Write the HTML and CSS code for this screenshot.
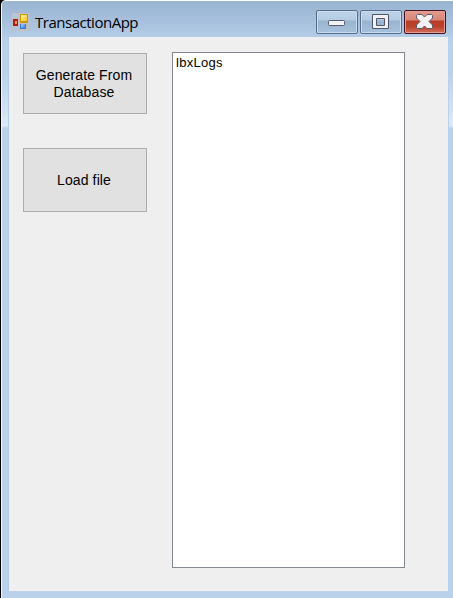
FILE: index.html
```html
<!DOCTYPE html>
<html lang="en">
<head>
<meta charset="utf-8">
<title>TransactionApp</title>
<link rel="stylesheet" href="styles.css">
</head>
<body>
<div class="window">
  <header class="titlebar">
    <svg class="app-icon" width="18" height="18" viewBox="0 0 18 18" aria-hidden="true">
      <defs>
        <linearGradient id="gold" x2="1" y2="1"><stop stop-color="#fff5a0"/><stop offset="1" stop-color="#f5c32c"/></linearGradient>
        <linearGradient id="azure" x2="1" y2="1"><stop stop-color="#a9d0ff"/><stop offset="1" stop-color="#3b7de8"/></linearGradient>
      </defs>
      <path d="M0 0h18v18H0z" fill="#bfc1c4"/>
      <path d="M1 1h5v4H1zM1 13h5v4H1z" fill="#aec6df"/>
      <path d="M8 1h8v9H8z" fill="#c99708"/>
      <path d="M9 2h6v6H9z" fill="url(#gold)"/>
      <path d="M1 6h5v7H1z" fill="#b51c10"/>
      <path d="M3 8h2v3H3z" fill="#ff8b70"/>
      <path d="M8 11h6v5H8z" fill="#3978d8"/>
      <path d="M9 11h4v4H9z" fill="url(#azure)"/>
    </svg>
    <h1 class="title">TransactionApp</h1>
    <div class="controls">
      <button class="control" aria-label="Minimize">
        <svg width="40" height="22" viewBox="0 0 40 22"><rect x="11.5" y="9.5" width="16" height="5" rx="1" fill="#f3f3f3" stroke="#555c70"/></svg>
      </button>
      <button class="control" aria-label="Maximize">
        <svg width="40" height="22" viewBox="0 0 40 22"><path fill-rule="evenodd" d="M11.500 3.500h16v14h-16zM15.500 7.500v7h8v-7z" fill="#f1f1f1" stroke="#4f566b"/></svg>
      </button>
      <button class="control close" aria-label="Close">
        <svg width="40" height="22" viewBox="0 0 40 22"><path d="M12.500 3.500h4.500l2.500 2.500 2.500-2.500h4.500l1 1v2.500l-3.500 3.500 3.500 3.500v2.500l-1 1h-4.500l-2.500-2.500-2.500 2.500h-4.500l-1-1v-2.500l3.500-3.500-3.500-3.500v-2.500z" fill="#f2f2f2" stroke="#59596b" stroke-linejoin="round"/></svg>
      </button>
    </div>
  </header>
  <main class="client">
    <div class="actions">
      <button class="action generate">Generate From<br>Database</button>
      <button class="action load">Load file</button>
    </div>
    <div class="logs">lbxLogs</div>
  </main>
</div>
</body>
</html>
```

FILE: styles.css
```css
* { box-sizing: border-box; }

body {
  margin: 0;
  background: #000;
  font-family: "Liberation Sans", Arial, sans-serif;
  color: #000;
}

.window {
  height: 598px;
  margin-left: 1px;
  padding: 0 5px 7px 7px;
  border-top: 1px solid #fff;
  border-left: 1px solid #f4f8fc;
  border-top-left-radius: 5px;
  background:
    linear-gradient(#99b4d1 0, #a6c0dd 20px, #b9d1ea 42px, #b9d1ea 70px, #dce8f6 124px, #dce8f6 125px, #b9d1ea 127px);
  display: flex;
  flex-direction: column;
}

.titlebar {
  flex: 0 0 36px;
  display: flex;
  align-items: flex-start;
  padding: 9px 2px 0 3px;
}

.app-icon { margin-top: 3px; }

.title {
  margin: 1px 0 0 5px;
  font: 400 15px/22px "Open Sans", "Noto Sans", sans-serif;
  letter-spacing: -0.48px;
}

.controls {
  display: flex;
  gap: 2px;
  margin-left: auto;
}

.control {
  width: 42px;
  height: 24px;
  padding: 0;
  border: 1px solid #596e8c;
  border-radius: 2px;
  background: linear-gradient(#bfd3e8 0, #b4cbe3 9px, #98b3d0 10px, #a8c2dd 100%);
  box-shadow: inset 0 0 0 1px #c9dcef;
}

.control svg { display: block; }

.close {
  border-color: #46101c;
  background: linear-gradient(#e49a8c 0, #d98778 9px, #b83b25 10px, #bd432d 16px, #d0705e 100%);
  box-shadow: inset 0 0 0 1px #e0a195;
}

.client {
  flex: 1;
  display: flex;
  align-items: flex-start;
  gap: 25px;
  padding: 15px 14px;
  background: #efefef;
  box-shadow: -1px 0 #b0cbe8, 1px 0 #b9d1ea;
}

.actions {
  display: flex;
  flex-direction: column;
  gap: 34px;
  width: 124px;
  padding-top: 1px;
}

.action {
  padding: 0 2px 0 0;
  border: 1px solid #adadad;
  background: #e1e1e1;
  font: 14px/17px "Liberation Sans", Arial, sans-serif;
  letter-spacing: 0.12px;
  color: #000;
}

.generate { height: 61px; }
.load { height: 64px; padding-top: 1px; }

.logs {
  width: 233px;
  height: 516px;
  padding: 2px 3px;
  border: 1px solid #828790;
  background: #fff;
  font-size: 13px;
  line-height: 16px;
  letter-spacing: 0.3px;
}
```
